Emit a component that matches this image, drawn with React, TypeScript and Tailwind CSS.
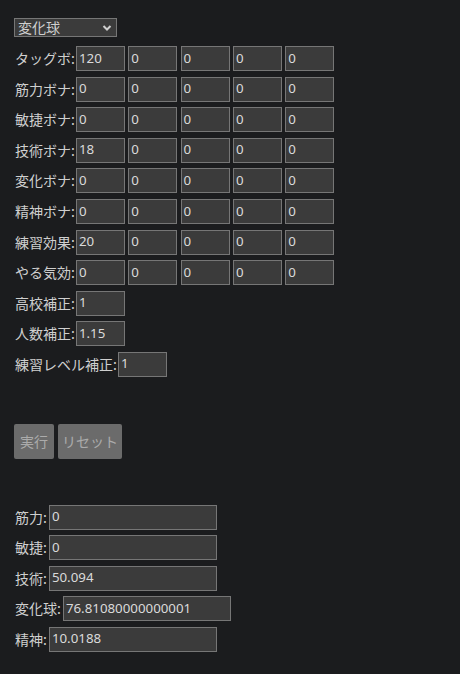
import React from 'react';

const bonusRows: [string, string[]][] = [
  ['タッグボ', ['120', '0', '0', '0', '0']],
  ['筋力ボナ', ['0', '0', '0', '0', '0']],
  ['敏捷ボナ', ['0', '0', '0', '0', '0']],
  ['技術ボナ', ['18', '0', '0', '0', '0']],
  ['変化ボナ', ['0', '0', '0', '0', '0']],
  ['精神ボナ', ['0', '0', '0', '0', '0']],
  ['練習効果', ['20', '0', '0', '0', '0']],
  ['やる気効', ['0', '0', '0', '0', '0']],
];

const singles: [string, string][] = [
  ['高校補正', '1'],
  ['人数補正', '1.15'],
  ['練習レベル補正', '1'],
];

const results: [string, string][] = [
  ['筋力', '0'],
  ['敏捷', '0'],
  ['技術', '50.094'],
  ['変化球', '76.81080000000001'],
  ['精神', '10.0188'],
];

const jp = "font-['Noto_Sans_CJK_JP',sans-serif]";

function Box({ value, wide }: { value: string; wide?: boolean }) {
  return (
    <div
      className={`h-[25px] ${wide ? 'w-[168px]' : 'w-[49px]'} bg-[#3b3b3b] border border-[#767676] px-[2px] flex items-center text-[13.3px] text-[#dadada] font-['Noto_Sans',sans-serif] overflow-hidden whitespace-nowrap`}
    >
      {value}
    </div>
  );
}

export default function App() {
  return (
    <div className={`min-h-[674px] bg-[#1b1c1e] text-[#cfcfcf] ${jp} text-[14px] px-[14px] pt-[18px]`}>
      {/* kind select */}
      <div className="w-[103px] h-[19px] bg-[#3b3b3b] border border-[#767676] flex items-center justify-between pl-[3px] pr-[4px] text-[14px] text-[#cfcfcf]">
        <span>変化球</span>
        <svg width="10" height="8" viewBox="0 0 10 8">
          <path d="M1.5 2 L5 5.5 L8.5 2" stroke="#d0d0d0" strokeWidth="2" fill="none" />
        </svg>
      </div>

      {/* bonuses */}
      <div className="mt-[9px] flex flex-col gap-[5.6px]">
        {bonusRows.map(([label, vals]) => (
          <div key={label} className="flex items-center h-[25px]">
            <span className="pl-[1px] w-[62px]">{label}:</span>
            <div className="flex gap-[3.3px]">
              {vals.map((v, i) => (
                <Box key={i} value={v} />
              ))}
            </div>
          </div>
        ))}
        {singles.map(([label, v]) => (
          <div key={label} className="flex items-center h-[25px]">
            <span className="pl-[1px] mr-[1px]">{label}:</span>
            <Box value={v} />
          </div>
        ))}
      </div>

      {/* actions */}
      <div className="mt-[47px] flex gap-[4px]">
        <button className="h-[35px] w-[40px] bg-[#6b6b6b] rounded-[2px] text-[#ababab] text-[14px]">実行</button>
        <button className="h-[35px] w-[64px] bg-[#6b6b6b] rounded-[2px] text-[#ababab] text-[14px]">リセット</button>
      </div>

      {/* results */}
      <div className="mt-[46px] flex flex-col gap-[5.5px]">
        {results.map(([label, v]) => (
          <div key={label} className="flex items-center h-[25px]">
            <span className="pl-[1px] mr-[2px]">{label}:</span>
            <Box value={v} wide />
          </div>
        ))}
      </div>
    </div>
  );
}
